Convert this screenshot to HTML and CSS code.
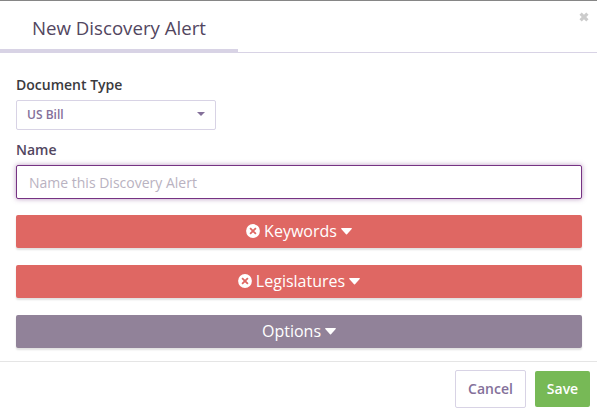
FILE: index.html
```html
<!DOCTYPE html>
<html lang="en">
<head>
    <meta charset="UTF-8">
    <meta name="viewport" content="width=device-width, initial-scale=1.0">
    <title>New Discovery Alert</title>
    <link rel="stylesheet" href="styles.css">
</head>
<body>
    <div class="modal">
        <div class="modal-header">
            <h3 class="modal-title">New Discovery Alert</h3>
            <button type="button" class="close" aria-label="Close">
                <svg width="10" height="10" viewBox="0 0 10 10"><path d="M1.6 1.6L8.4 8.4M8.4 1.6L1.6 8.4" stroke="#ccc" stroke-width="3.2"/></svg>
            </button>
        </div>

        <div class="modal-body">
            <label class="type-label">Document Type</label>
            <div class="select">
                <span>US Bill</span>
                <svg width="8" height="4" viewBox="0 0 8 4"><path d="M0 0h8L4 4z" fill="#84709a"/></svg>
            </div>

            <label class="name-label" for="alertName">Name</label>
            <input type="text" id="alertName" class="name-input" placeholder="Name this Discovery Alert">

            <button type="button" class="section-btn section-error">
                <svg class="icon-times" width="14" height="14" viewBox="0 0 14 14"><circle cx="7" cy="7" r="6.9" fill="#fff"/><path d="M4.1 4.1l5.8 5.8M9.9 4.1L4.1 9.9" stroke="#df6763" stroke-width="1.8"/></svg>
                <span>Keywords</span>
                <svg class="icon-caret" width="11" height="7" viewBox="0 0 11 7"><path d="M.6 0h9.8q.7.2.3.9L6 6.2q-.5.5-1 0L.3.9Q-.1.2.6 0z" fill="#fff"/></svg>
            </button>
            <button type="button" class="section-btn section-error">
                <svg class="icon-times" width="14" height="14" viewBox="0 0 14 14"><circle cx="7" cy="7" r="6.9" fill="#fff"/><path d="M4.1 4.1l5.8 5.8M9.9 4.1L4.1 9.9" stroke="#df6763" stroke-width="1.8"/></svg>
                <span>Legislatures</span>
                <svg class="icon-caret" width="11" height="7" viewBox="0 0 11 7"><path d="M.6 0h9.8q.7.2.3.9L6 6.2q-.5.5-1 0L.3.9Q-.1.2.6 0z" fill="#fff"/></svg>
            </button>
            <button type="button" class="section-btn">
                <span>Options</span>
                <svg class="icon-caret" width="11" height="7" viewBox="0 0 11 7"><path d="M.6 0h9.8q.7.2.3.9L6 6.2q-.5.5-1 0L.3.9Q-.1.2.6 0z" fill="#fff"/></svg>
            </button>
        </div>

        <div class="modal-footer">
            <button type="button" class="btn btn-cancel">Cancel</button>
            <button type="button" class="btn btn-save">Save</button>
        </div>
    </div>
</body>
</html>
```

FILE: styles.css
```css
* {
    margin: 0;
    padding: 0;
    box-sizing: border-box;
}

body {
    font-family: 'Open Sans', 'Noto Sans', sans-serif;
    background: #fff;
    color: #524660;
    overflow: hidden;
}

button,
input {
    font-family: inherit;
}

.modal {
    height: 416px;
    border-top: 1px solid #868686;
    display: flex;
    flex-direction: column;
}

/* Header */
.modal-header {
    height: 52px;
    display: flex;
    flex-shrink: 0;
    justify-content: space-between;
    align-items: flex-start;
    border-bottom: 1px solid #d8d3e5;
}

.modal-title {
    width: 238px;
    height: 51px;
    padding-left: 32px;
    border-bottom: 3px solid #d8d3e5;
    font-size: 18.66px;
    font-weight: 400;
    line-height: 54px;
}

.close {
    margin: 11px 8px 0 0;
    border: none;
    background: none;
    line-height: 0;
}

/* Form */
.modal-body {
    height: 308px;
    padding: 22px 15px 0 16px;
    display: flex;
    flex-direction: column;
    flex-shrink: 0;
}

.modal-body > * {
    flex-shrink: 0;
}

.type-label,
.name-label {
    height: 20px;
    font-size: 14px;
    font-weight: 600;
    line-height: 20px;
}

.type-label {
    color: #3a3a3e;
}

.select {
    width: 200px;
    height: 30px;
    margin: 5px 0 10px;
    padding: 0 10px 2px;
    display: flex;
    align-items: center;
    justify-content: space-between;
    border: 1px solid #d8d3e5;
    border-radius: 2px;
    color: #84709a;
    font-size: 12px;
    font-weight: 600;
}

.name-input {
    height: 34px;
    margin: 5px 0 16px;
    padding: 1px 12px 0;
    border: 1px solid #763383;
    border-radius: 2px;
    outline: none;
    box-shadow: 0 0 5px rgba(118, 51, 131, 0.5);
    font-size: 14px;
}

.name-input::placeholder {
    color: #b9b2c1;
}

.section-btn {
    height: 33px;
    margin-bottom: 17px;
    padding-bottom: 1px;
    display: flex;
    align-items: center;
    justify-content: center;
    border: none;
    border-radius: 2px;
    background: #918299;
    box-shadow: 0 2px 2px rgba(0, 0, 0, 0.12);
    color: #fff;
    font-size: 16px;
}

.section-error {
    background: #df6763;
}

.icon-times {
    margin-right: 4px;
}

.icon-caret {
    margin-left: 4px;
}

/* Footer */
.modal-footer {
    flex: 1;
    padding: 8px 7px 0 0;
    display: flex;
    justify-content: flex-end;
    align-items: flex-start;
    gap: 9px;
    border-top: 1px solid #e5e5e5;
}

.btn {
    padding-bottom: 2px;
    border-radius: 2px;
    font-size: 14px;
    font-weight: 600;
}

.btn-cancel {
    width: 71px;
    height: 38px;
    border: 1px solid #d8d3e5;
    background: #fff;
    color: #84709a;
}

.btn-save {
    width: 55px;
    height: 36px;
    margin-top: 1px;
    border: none;
    background: #77b956;
    color: #fff;
}
```
